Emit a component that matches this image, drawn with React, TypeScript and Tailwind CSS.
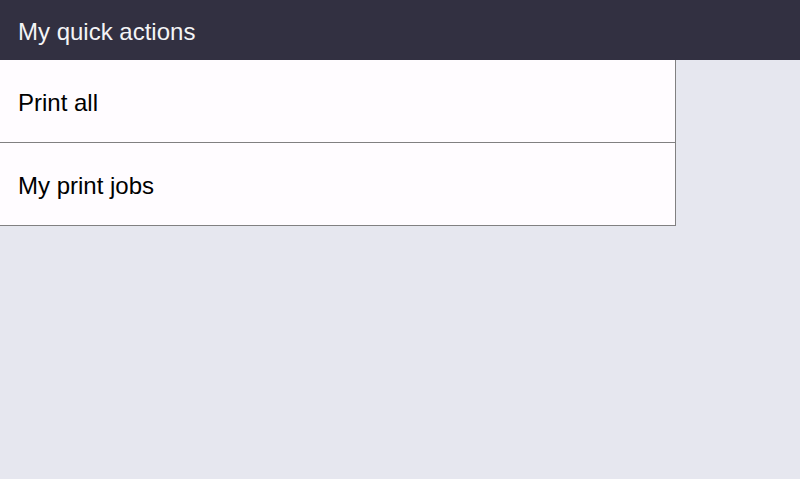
import React from 'react';

const actions = ['Print all', 'My print jobs'];

export default function App() {
  return (
    <div className="w-[800px] h-[479px] bg-[#e6e7ef] flex flex-col font-['Liberation_Sans',Arial,sans-serif]">
      <header className="h-[60px] bg-[#323041] flex items-center px-[18px] pt-[4px]">
        <span className="text-[24px] leading-none text-[#f4f4f6]">My quick actions</span>
      </header>
      <ul className="w-[676px] bg-[#fffcff] border-r border-[#818081]">
        {actions.map((a) => (
          <li
            key={a}
            className="h-[83px] border-b border-[#818081] flex items-center px-[18px] pt-[3px] text-[24px] leading-none text-black"
          >
            {a}
          </li>
        ))}
      </ul>
    </div>
  );
}
